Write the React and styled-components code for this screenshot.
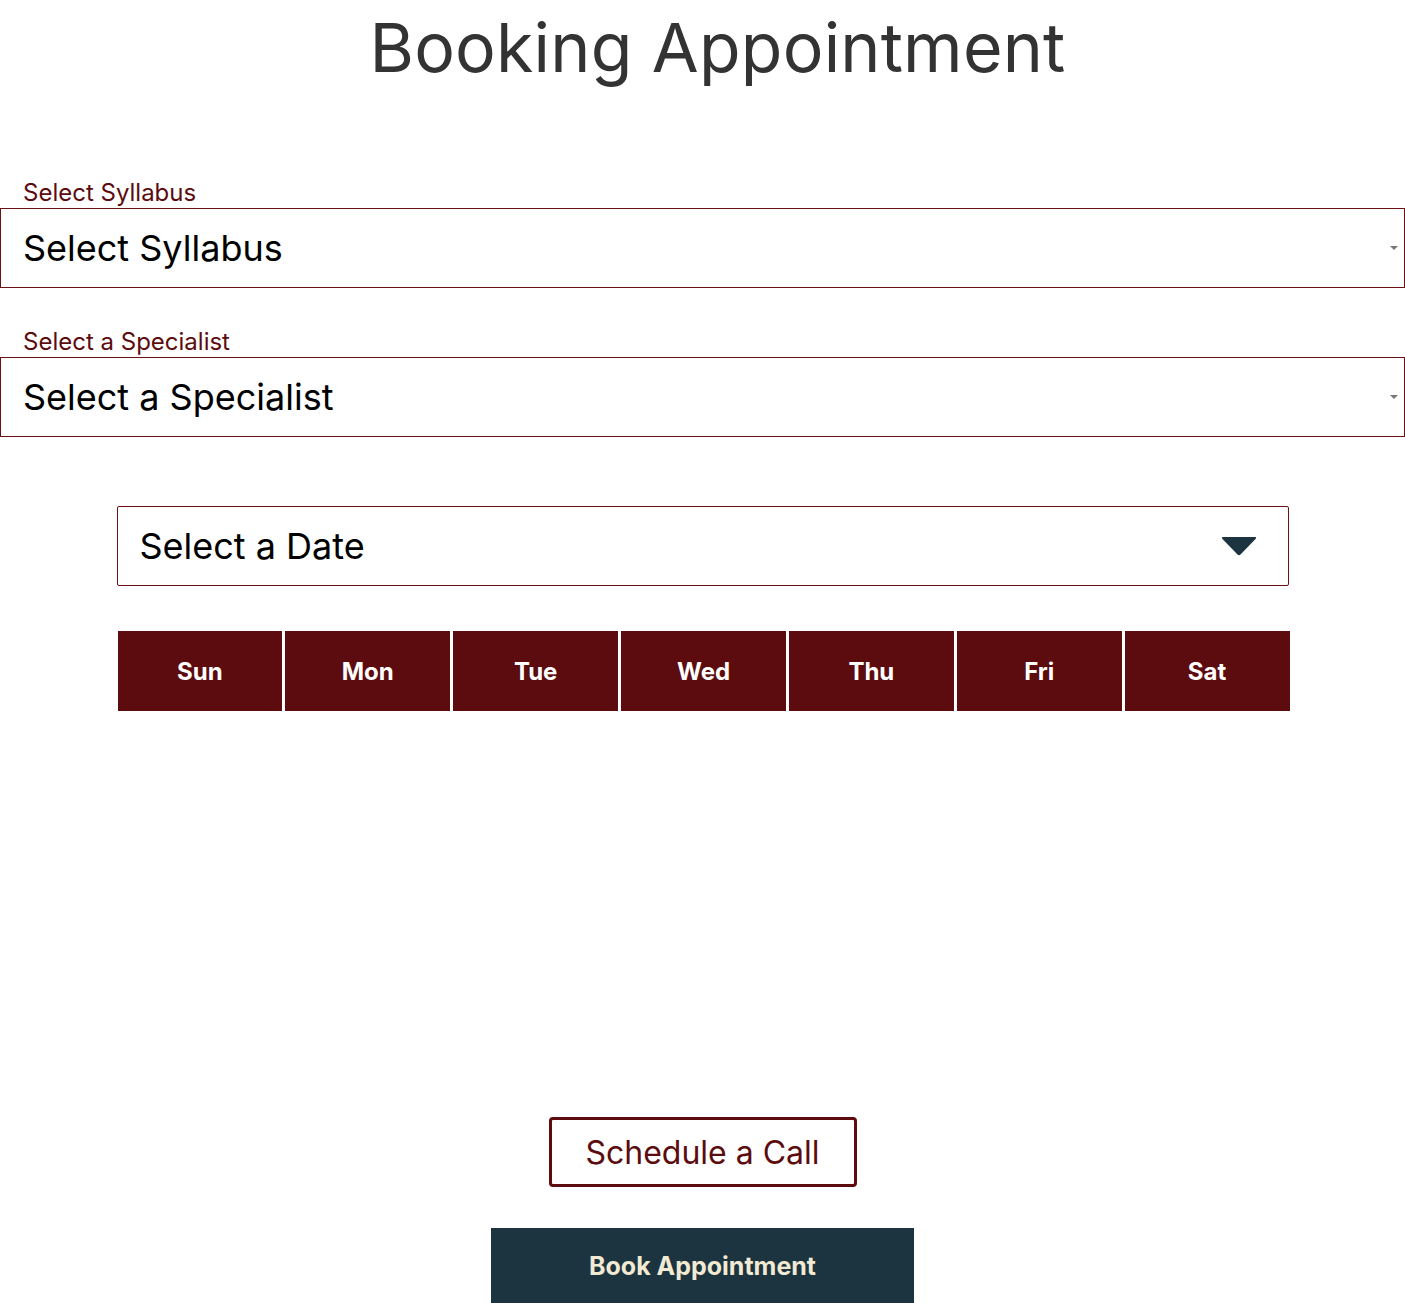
import React from 'react';
import styled, { createGlobalStyle } from 'styled-components';

const GlobalStyle = createGlobalStyle`
  body {
    margin: 0;
    background: #fff;
    font-family: Inter, "Noto Sans", sans-serif;
  }
`;

const Page = styled.div`
  display: flex;
  flex-direction: column;
  width: 1405px;
`;

const Title = styled.h1`
  margin: 0;
  padding: 9px 0 0 30px;
  height: 91px;
  text-align: center;
  font-size: 68px;
  font-weight: 400;
  line-height: 76px;
  color: #333;
  letter-spacing: 0.2px;
`;

const Field = styled.div`
  display: flex;
  flex-direction: column;
  margin-top: ${(p) => p.top}px;
`;

const Label = styled.label`
  padding-left: 23px;
  font-size: 24px;
  line-height: 30px;
  color: #5c0b0e;
`;

const SelectBox = styled.div`
  display: flex;
  align-items: center;
  justify-content: space-between;
  height: 80px;
  box-sizing: border-box;
  border: 1px solid #6b1116;
  padding: 0 6px 0 22px;
  font-size: 36px;
  color: #000;
`;

const SmallArrow = styled.span`
  width: 0;
  height: 0;
  border-left: 4px solid transparent;
  border-right: 4px solid transparent;
  border-top: 4px solid #777;
`;

const DateSection = styled.div`
  display: flex;
  flex-direction: column;
  width: 1172px;
  margin: 69px auto 0;
`;

const DateBox = styled(SelectBox)`
  padding: 0 30px 0 22px;
  border-radius: 2px;
`;

const Caret = styled.svg`
  width: 38px;
  height: 22px;
`;

const Week = styled.div`
  display: grid;
  grid-template-columns: repeat(7, 1fr);
  gap: 3px;
  margin-top: 45px;
  width: 1172px;
  margin-left: 1px;
`;

const Day = styled.div`
  display: flex;
  align-items: center;
  justify-content: center;
  height: 80px;
  background: #5c0b0e;
  color: #fff;
  font-size: 24px;
  font-weight: 700;
`;

const Actions = styled.div`
  display: flex;
  flex-direction: column;
  align-items: center;
  margin-top: 406px;
`;

const CallButton = styled.button`
  width: 308px;
  height: 70px;
  border: 3px solid #5c0b0e;
  border-radius: 4px;
  background: #fff;
  color: #5c0b0e;
  font-family: inherit;
  font-size: 32px;
`;

const BookButton = styled.button`
  margin-top: 41px;
  width: 423px;
  height: 75px;
  border: none;
  background: #1b3440;
  color: #f3ead3;
  font-family: inherit;
  font-size: 25px;
  font-weight: 700;
`;

const days = ['Sun', 'Mon', 'Tue', 'Wed', 'Thu', 'Fri', 'Sat'];

export default function App() {
  return (
    <Page>
      <GlobalStyle />
      <Title>Booking Appointment</Title>
      <Field top={78}>
        <Label>Select Syllabus</Label>
        <SelectBox>
          Select Syllabus
          <SmallArrow />
        </SelectBox>
      </Field>
      <Field top={39}>
        <Label>Select a Specialist</Label>
        <SelectBox>
          Select a Specialist
          <SmallArrow />
        </SelectBox>
      </Field>
      <DateSection>
        <DateBox>
          Select a Date
          <Caret viewBox="0 0 38 22">
            <path d="M3 2 H35 Q37 2 35.5 4 L20.5 19.5 Q19 21 17.5 19.5 L2.5 4 Q1 2 3 2 Z" fill="#1b3440" />
          </Caret>
        </DateBox>
        <Week>
          {days.map((d) => (
            <Day key={d}>{d}</Day>
          ))}
        </Week>
      </DateSection>
      <Actions>
        <CallButton>Schedule a Call</CallButton>
        <BookButton>Book Appointment</BookButton>
      </Actions>
    </Page>
  );
}
